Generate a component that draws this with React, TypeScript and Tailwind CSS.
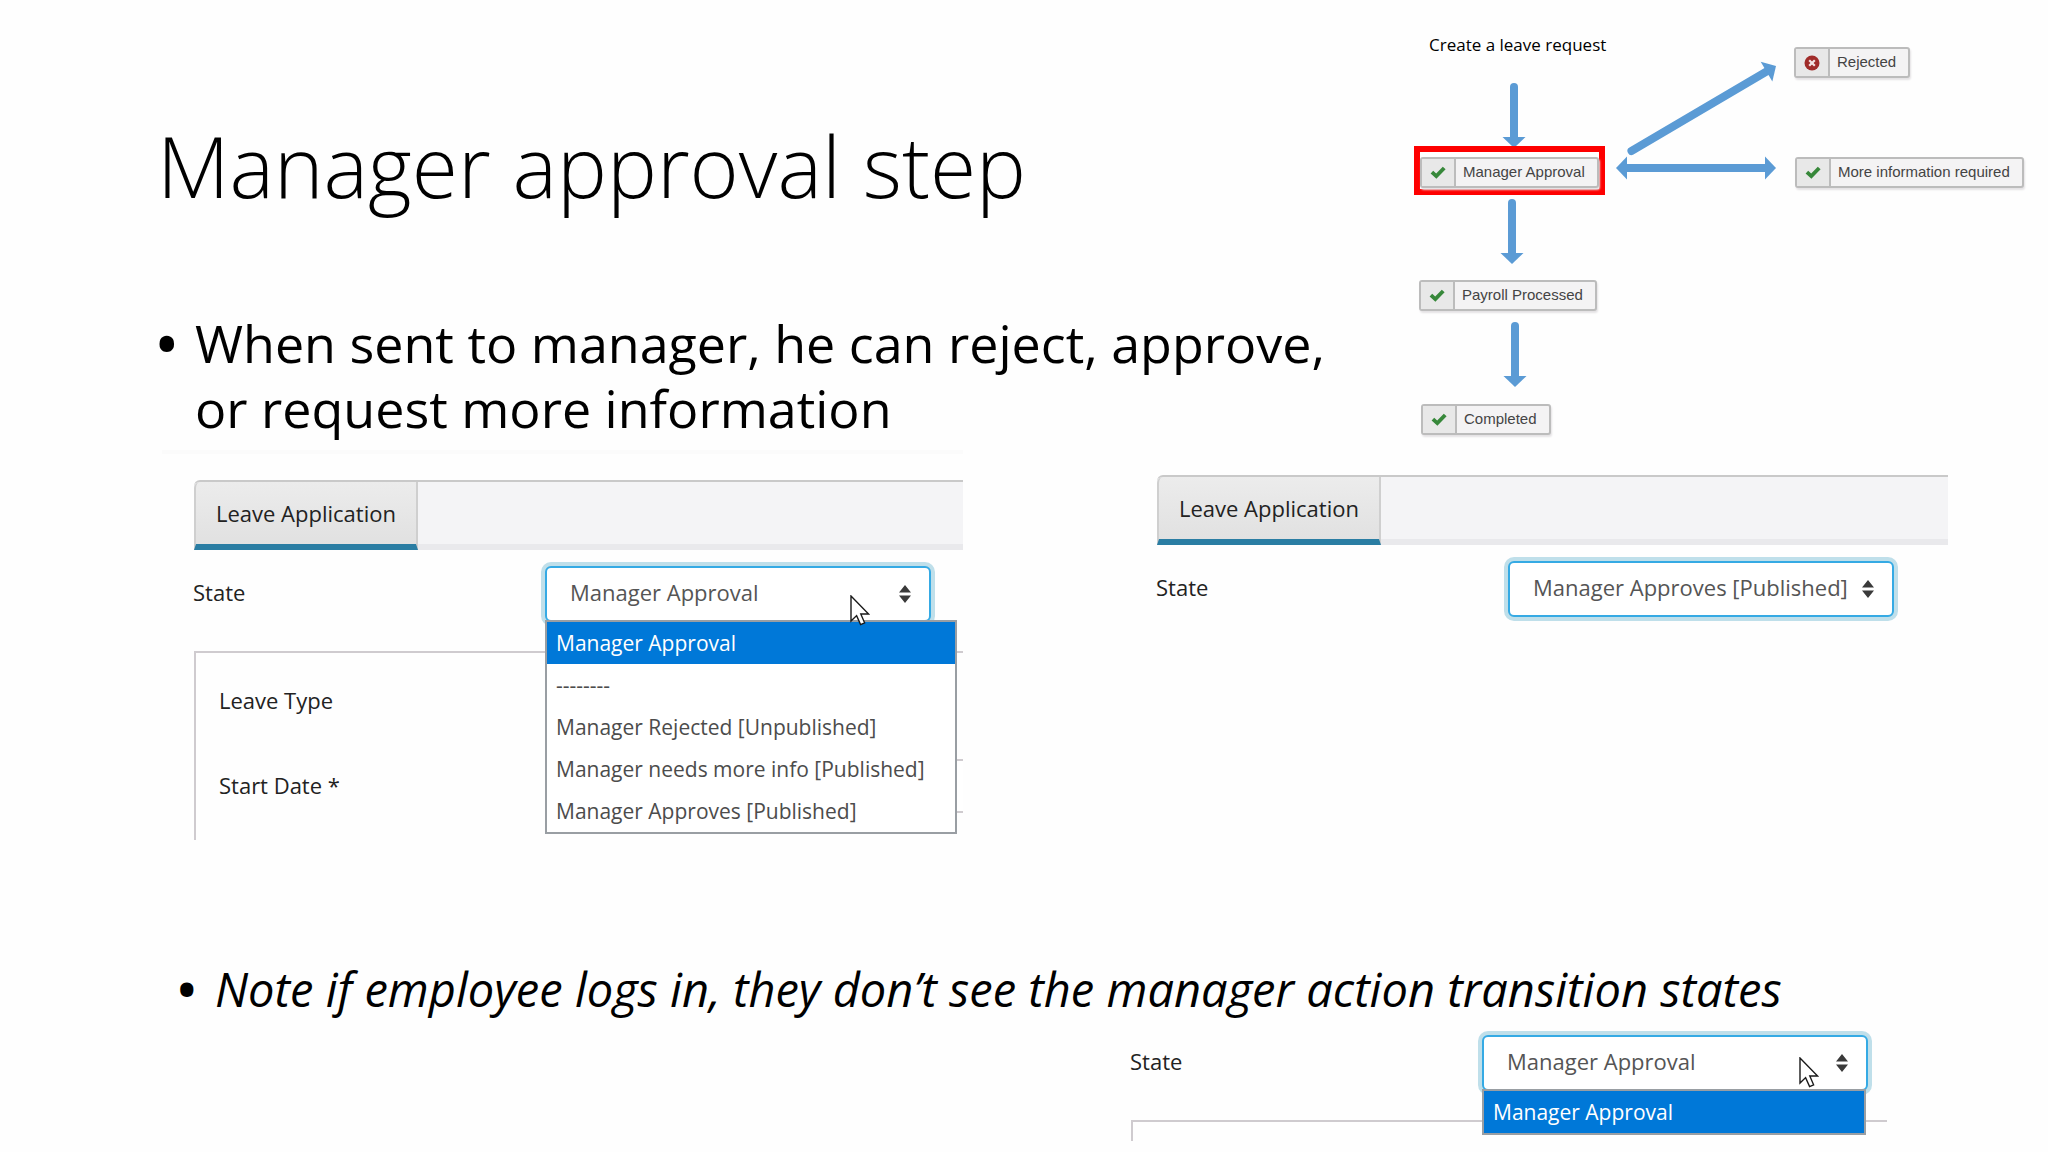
import { useId, type ReactNode } from "react";

const BLUE = "#5b9bd5";

function CheckIcon() {
  return (
    <svg viewBox="0 0 16 14" className="h-[14px] w-4" aria-hidden="true">
      <path d="M.6 7.4 3.2 4.8 6.2 7.4 12.8 .8 15.6 3.2 6.4 12.8Z" fill="#37883a" />
    </svg>
  );
}

function CrossIcon() {
  return (
    <svg viewBox="0 0 16 16" className="size-4" aria-hidden="true">
      <circle cx="8" cy="8" r="7.5" fill="#a02c2a" />
      <path d="M5.2 5.2 10.8 10.8M10.8 5.2 5.2 10.8" stroke="#f3e4e4" strokeWidth="2.2" />
    </svg>
  );
}

function NodeButton({ label, rejected = false }: { label: string; rejected?: boolean }) {
  return (
    <button
      type="button"
      className="flex h-[31px] items-stretch whitespace-nowrap rounded-[3px] border-2 border-[#bcbcbc] bg-[#f4f3f4] font-['Liberation_Sans',sans-serif] text-[15px] text-[#444] shadow-[1px_2px_2px_#e4e2e4]"
    >
      <span className="flex w-[34px] items-center justify-center border-r-2 border-[#bcbcbc] bg-[#e8e8e8]">
        {rejected ? <CrossIcon /> : <CheckIcon />}
      </span>
      <span className="flex items-center pl-[7px] pr-3">{label}</span>
    </button>
  );
}

function Arrow({ x1, y1, x2, y2, both = false }: { x1: number; y1: number; x2: number; y2: number; both?: boolean }) {
  const length = Math.hypot(x2 - x1, y2 - y1);
  const angle = (Math.atan2(y2 - y1, x2 - x1) * 180) / Math.PI;
  return (
    <g transform={`translate(${x1} ${y1}) rotate(${angle})`} fill={BLUE} stroke={BLUE}>
      <line x1={both ? 9 : 4} y1="0" x2={length - 9} y2="0" strokeWidth="8" strokeLinecap={both ? "butt" : "round"} />
      <path d={`M${length} 0 l-11 -11.5 v23Z`} stroke="none" />
      {both && <path d="M0 0 l11 -11.5 v23Z" stroke="none" />}
    </g>
  );
}

function Workflow() {
  return (
    <div className="relative h-[450px]">
      <svg viewBox="0 0 668 450" width="668" height="450" className="absolute left-0 top-0" aria-hidden="true">
        <Arrow x1={134} y1={83} x2={134} y2={148} />
        <Arrow x1={132} y1={199} x2={132} y2={264} />
        <Arrow x1={135} y1={322} x2={135} y2={387} />
        <Arrow x1={248} y1={153} x2={396} y2={66} />
        <Arrow x1={236} y1={168} x2={396} y2={168} both />
      </svg>
      <p className="absolute left-[49px] top-[34px] whitespace-nowrap text-[17px] leading-[22px] text-black">
        Create a leave request
      </p>
      <div className="absolute left-[34px] top-[146px] border-[6px] border-[#fe0000] bg-white pb-[1px] pt-[5px]">
        <NodeButton label="Manager Approval" />
      </div>
      <div className="absolute left-[39px] top-[280px]">
        <NodeButton label="Payroll Processed" />
      </div>
      <div className="absolute left-[41px] top-[404px]">
        <NodeButton label="Completed" />
      </div>
      <div className="absolute left-[414px] top-[47px]">
        <NodeButton label="Rejected" rejected />
      </div>
      <div className="absolute left-[415px] top-[157px]">
        <NodeButton label="More information required" />
      </div>
    </div>
  );
}

function Pointer({ className }: { className: string }) {
  return (
    <svg viewBox="0 0 20 31" className={`pointer-events-none absolute z-20 h-[31px] w-5 ${className}`} aria-hidden="true">
      <path d="M1 1V26L6.6 20.6 10.6 29.6 14.6 27.8 10.8 19H18.6Z" fill="#fff" stroke="#1a1a1a" strokeWidth="1.4" />
    </svg>
  );
}

function StateField({ value, options, wide = false }: { value: string; options?: string[]; wide?: boolean }) {
  const id = useId();
  return (
    <div className="flex items-center">
      <label htmlFor={id} className="w-[352px] shrink-0 pb-1 text-[#222]">
        State
      </label>
      <div className="relative w-[386px]">
        <select
          id={id}
          defaultValue={value}
          className="block h-[56px] w-full appearance-none rounded-md border-2 border-[#35aae4] bg-white pb-1 pl-[23px] pr-8 text-[#555] shadow-[0_0_0_4px_#bfdfea] outline-none"
        >
          <option>{value}</option>
        </select>
        <svg viewBox="0 0 12 18" className="pointer-events-none absolute right-[20px] top-[19px] h-[18px] w-3" aria-hidden="true">
          <path d="M6 0 12 7.5H0ZM6 18 0 10.5H12Z" fill="#3a3a3a" />
        </svg>
        {options && (
          <>
            <Pointer className={wide ? "right-[61px] top-[29px]" : "right-[49px] top-[22px]"} />
            <ul
              role="listbox"
              aria-label="State options"
              className={`absolute left-0 top-[54px] z-10 border-2 border-[#999ea3] bg-white text-[21px] text-[#4c4c4c] ${wide ? "w-[412px]" : "w-[384px]"}`}
            >
              {options.map((o, i) => (
                <li
                  key={o}
                  role="option"
                  aria-selected={i === 0}
                  className={`h-[42px] whitespace-nowrap pl-[9px] leading-[42px] ${i === 0 ? "bg-[#0078d8] text-white" : ""}`}
                >
                  {o}
                </li>
              ))}
            </ul>
          </>
        )}
      </div>
    </div>
  );
}

function TabBar() {
  return (
    <div role="tablist" className="mb-4 ml-px flex h-[70px] rounded-tl-md border-t-2 border-[#c9c9c9] bg-[#f4f4f6]">
      <button
        type="button"
        role="tab"
        aria-selected="true"
        className="rounded-tl-md border-b-[6px] border-l-2 border-r-2 border-b-[#2a7da3] border-l-[#cfcfcf] border-r-[#cfcfcf] bg-linear-to-b from-[#ececec] to-[#e1e1e1] px-5 text-[#222]"
      >
        Leave Application
      </button>
      <div className="flex-1 border-b-[6px] border-[#e9e9ec]" />
    </div>
  );
}

function Bullet({ children }: { children: ReactNode }) {
  return (
    <li className="flex">
      <span className="w-[38px] shrink-0 font-bold">•</span>
      <span>{children}</span>
    </li>
  );
}

export default function App() {
  const dateId = useId();
  return (
    <main className="min-h-screen bg-[#fefefe] font-['Open_Sans',sans-serif] text-[22px] text-[#222]">
      <header className="grid grid-cols-[1fr_668px]">
        <div className="pl-[157px] pt-[116px] text-black">
          <h1 className="whitespace-nowrap text-[84px] font-light leading-[100px]">Manager approval step</h1>
          <ul className="mt-[94px] whitespace-nowrap text-[52px] leading-[65px]">
            <Bullet>
              When sent to manager, he can reject, approve,
              <br />
              or request more information
            </Bullet>
          </ul>
        </div>
        <Workflow />
      </header>

      <div className="grid grid-cols-[770fr_792fr] gap-[193px] pl-[193px] pr-[100px]">
        <section className="-ml-[31px] border-t-4 border-[#fbfbfb] pl-[31px] pt-[26px]">
          <TabBar />
          <StateField
            wide
            value="Manager Approval"
            options={[
              "Manager Approval",
              "--------",
              "Manager Rejected [Unpublished]",
              "Manager needs more info [Published]",
              "Manager Approves [Published]",
            ]}
          />
          <div className="ml-px mt-[29px] h-[189px] border-l-2 border-t-2 border-[#cfcbcf] pl-[23px] pt-[20px]">
            <p className="h-[54px] leading-[54px]">Leave Type</p>
            <div className="mt-[32px] flex items-center">
              <label htmlFor={dateId} className="w-[332px] shrink-0 pb-[2px]">
                Start Date *
              </label>
              <input id={dateId} className="h-[54px] min-w-0 flex-1 border-y-2 border-[#cfcbcf] bg-white" />
            </div>
          </div>
        </section>
        <section className="pt-[25px]">
          <TabBar />
          <StateField value="Manager Approves [Published]" />
        </section>
      </div>

      <ul className="mt-[119px] whitespace-nowrap pl-[177px] text-[47px] italic leading-[60px] text-black">
        <Bullet>Note if employee logs in, they don’t see the manager action transition states</Bullet>
      </ul>

      <section className="mt-4 pl-[1130px] pr-[161px]">
        <StateField value="Manager Approval" options={["Manager Approval"]} />
        <div className="ml-px mt-[29px] h-[21px] border-l-2 border-t-2 border-[#cfcbcf]" />
      </section>
    </main>
  );
}
